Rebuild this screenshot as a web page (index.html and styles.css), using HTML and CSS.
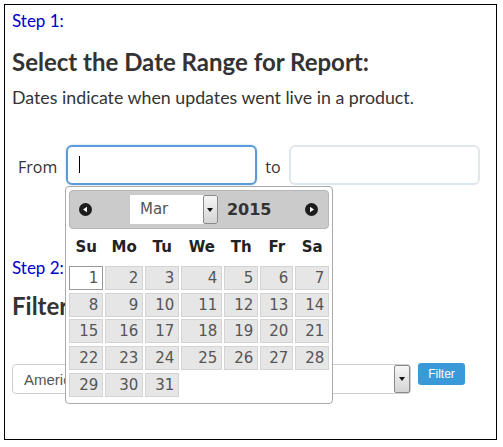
FILE: index.html
```html
<!DOCTYPE html>
<html lang="en">
<head>
<meta charset="UTF-8">
<meta name="viewport" content="width=device-width, initial-scale=1.0">
<title>Report</title>
<link rel="stylesheet" href="styles.css">
</head>
<body>
<div class="panel">
    <div class="step">Step 1:</div>
    <h2 class="title">Select the Date Range for Report:</h2>
    <p class="note">Dates indicate when updates went live in a product.</p>

    <div class="range">
        <label class="range-label">From</label>
        <div class="field-wrap">
            <div class="date-input focused"><span class="caret"></span></div>

            <div class="datepicker">
                <div class="dp-header">
                    <span class="dp-nav">
                        <svg width="13" height="13" viewBox="0 0 13 13"><circle cx="6.5" cy="6.5" r="6.5" fill="#1c1c1c"/><polygon points="4,6.5 8,3.8 8,9.2" fill="#fff"/></svg>
                    </span>
                    <div class="dp-title">
                        <div class="dp-month">
                            <span class="dp-month-text">Mar</span>
                            <span class="dp-month-btn"><span class="dp-arrow"></span></span>
                        </div>
                        <span class="dp-year">2015</span>
                    </div>
                    <span class="dp-nav">
                        <svg width="13" height="13" viewBox="0 0 13 13"><circle cx="6.5" cy="6.5" r="6.5" fill="#1c1c1c"/><polygon points="9,6.5 5,3.8 5,9.2" fill="#fff"/></svg>
                    </span>
                </div>
                <div class="dp-grid">
                    <span class="dow">Su</span>
                    <span class="dow">Mo</span>
                    <span class="dow">Tu</span>
                    <span class="dow">We</span>
                    <span class="dow">Th</span>
                    <span class="dow">Fr</span>
                    <span class="dow">Sa</span>
                    <span class="day today">1</span>
                    <span class="day">2</span>
                    <span class="day">3</span>
                    <span class="day">4</span>
                    <span class="day">5</span>
                    <span class="day">6</span>
                    <span class="day">7</span>
                    <span class="day">8</span>
                    <span class="day">9</span>
                    <span class="day">10</span>
                    <span class="day">11</span>
                    <span class="day">12</span>
                    <span class="day">13</span>
                    <span class="day">14</span>
                    <span class="day">15</span>
                    <span class="day">16</span>
                    <span class="day">17</span>
                    <span class="day">18</span>
                    <span class="day">19</span>
                    <span class="day">20</span>
                    <span class="day">21</span>
                    <span class="day">22</span>
                    <span class="day">23</span>
                    <span class="day">24</span>
                    <span class="day">25</span>
                    <span class="day">26</span>
                    <span class="day">27</span>
                    <span class="day">28</span>
                    <span class="day">29</span>
                    <span class="day">30</span>
                    <span class="day">31</span>
                </div>
            </div>
        </div>
        <label class="range-label to">to</label>
        <div class="date-input"></div>
    </div>

    <div class="step step-two">Step 2:</div>
    <h2 class="title filter-title">Filter by Product:</h2>

    <div class="filter-row">
        <div class="select-box">
            <span class="select-text">Americas</span>
            <span class="select-btn"><span class="dp-arrow"></span></span>
        </div>
        <button class="filter-btn">Filter</button>
    </div>
</div>
</body>
</html>
```

FILE: styles.css
```css
body {
    margin: 0;
    font-family: "Lato", "Liberation Sans", sans-serif;
    background-color: #fff;
}

.panel {
    margin: 4px;
    width: 493px;
    height: 436px;
    box-sizing: border-box;
    border: 1px solid #000;
    padding: 6px 7px;
}

.step {
    color: #0000cc;
    font-size: 17px;
    line-height: 20px;
}

.title {
    margin: 16px 0 0;
    font-size: 24px;
    line-height: 30px;
    font-weight: 700;
    color: #333;
}

.note {
    margin: 8px 0 0;
    font-size: 17.8px;
    line-height: 24px;
    color: #333;
}

.range {
    display: flex;
    align-items: center;
    margin-top: 36px;
}

.range-label {
    font-family: "Open Sans", sans-serif;
    font-size: 16px;
    color: #333;
    margin: 4px 9px 0 6px;
}

.range-label.to {
    margin: 4px 8px 0 8px;
}

.field-wrap {
    position: relative;
}

.date-input {
    width: 191px;
    height: 40px;
    box-sizing: border-box;
    border: 2px solid #dfe7ee;
    border-radius: 6px;
    position: relative;
}

.date-input.focused {
    border-color: #5a9ad6;
    box-shadow: 0 0 2px rgba(90, 154, 214, 0.5);
}

.caret {
    position: absolute;
    left: 11px;
    top: 9px;
    width: 1px;
    height: 17px;
    background-color: #000;
}

/* календарь */
.datepicker {
    position: absolute;
    top: 41px;
    left: -1px;
    z-index: 5;
    width: 268px;
    box-sizing: border-box;
    background-color: #fff;
    border: 1px solid #aaa;
    border-radius: 4px;
    padding: 3px 3px 6px;
    font-family: "DejaVu Sans", Verdana, sans-serif;
}

.dp-header {
    height: 39px;
    box-sizing: border-box;
    background-color: #cbcbcb;
    border: 1px solid #b5b5b5;
    border-radius: 4px;
    display: flex;
    align-items: center;
    justify-content: space-between;
    padding: 0 10px 0 9px;
}

.dp-nav {
    display: flex;
}

.dp-title {
    display: flex;
    align-items: center;
    gap: 9px;
    margin-left: 4px;
}

.dp-month {
    display: flex;
    width: 88px;
    height: 29px;
    background-color: #fff;
}

.dp-month-text {
    flex: 1;
    font-size: 15px;
    color: #555;
    line-height: 29px;
    padding-left: 10px;
}

.dp-month-btn {
    width: 15px;
    box-sizing: border-box;
    border: 1px solid #8a8a8a;
    border-radius: 2px;
    background: linear-gradient(#f6f6f6, #d4d4d4);
    display: flex;
    align-items: center;
    justify-content: center;
}

.dp-arrow {
    width: 0;
    height: 0;
    border-left: 3px solid transparent;
    border-right: 3px solid transparent;
    border-top: 4px solid #111;
}

.dp-year {
    font-size: 16px;
    font-weight: 700;
    color: #333;
}

.dp-grid {
    display: grid;
    grid-template-columns: 34px 38px 34px 41px 34px 33px 34px;
    grid-template-rows: 32px;
    grid-auto-rows: 24px;
    column-gap: 2px;
    row-gap: 2.75px;
    margin-top: 2px;
}

.dow {
    line-height: 32px;
    text-align: center;
    font-weight: 700;
    font-size: 15px;
    color: #222;
}

.day {
    box-sizing: border-box;
    background-color: #e6e6e6;
    border: 1px solid #d3d3d3;
    color: #555;
    font-size: 15px;
    line-height: 22px;
    text-align: right;
    padding-right: 4px;
}

.day.today {
    background-color: #fff;
    border-color: #999;
}

.step-two {
    margin-top: 73px;
}

.filter-title {
    margin-top: 13px;
}

.filter-row {
    display: flex;
    align-items: flex-start;
    margin-top: 42px;
}

.select-box {
    width: 399px;
    height: 30px;
    box-sizing: border-box;
    margin-top: 1px;
    border: 1px solid #cfcfcf;
    border-radius: 4px;
    display: flex;
    align-items: center;
    justify-content: space-between;
    padding: 0 0 0 11px;
}

.select-text {
    font-family: "Liberation Sans", Arial, sans-serif;
    font-size: 15px;
    color: #555;
}

.select-btn {
    width: 16px;
    height: 28px;
    box-sizing: border-box;
    border: 1px solid #8a8a8a;
    border-radius: 2px;
    background: linear-gradient(#f6f6f6, #d4d4d4);
    display: flex;
    align-items: center;
    justify-content: center;
}

.filter-btn {
    margin-left: 7px;
    width: 47px;
    height: 22px;
    border: none;
    border-radius: 3px;
    background-color: #3a9ad9;
    color: #fff;
    font-family: "Liberation Sans", Arial, sans-serif;
    font-size: 12px;
    padding: 0;
}
```
